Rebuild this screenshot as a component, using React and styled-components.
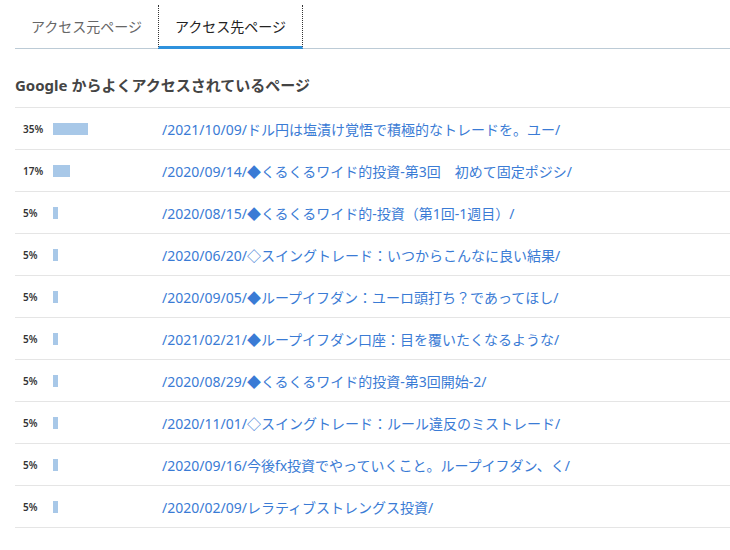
import React from "react";
import styled, { createGlobalStyle } from "styled-components";

const rows = [
  { pct: 35, path: "/2021/10/09/ドル円は塩漬け覚悟で積極的なトレードを。ユー/" },
  { pct: 17, path: "/2020/09/14/◆くるくるワイド的投資-第3回　初めて固定ポジシ/" },
  { pct: 5, path: "/2020/08/15/◆くるくるワイド的-投資（第1回-1週目）/" },
  { pct: 5, path: "/2020/06/20/◇スイングトレード：いつからこんなに良い結果/" },
  { pct: 5, path: "/2020/09/05/◆ループイフダン：ユーロ頭打ち？であってほし/" },
  { pct: 5, path: "/2021/02/21/◆ループイフダン口座：目を覆いたくなるような/" },
  { pct: 5, path: "/2020/08/29/◆くるくるワイド的投資-第3回開始-2/" },
  { pct: 5, path: "/2020/11/01/◇スイングトレード：ルール違反のミストレード/" },
  { pct: 5, path: "/2020/09/16/今後fx投資でやっていくこと。ループイフダン、く/" },
  { pct: 5, path: "/2020/02/09/レラティブストレングス投資/" },
];

export default function App() {
  return (
    <>
      <GlobalStyle />
      <Page>
        <Tabs>
          <Tab>アクセス元ページ</Tab>
          <Tab $active>アクセス先ページ</Tab>
        </Tabs>
        <Heading>Google からよくアクセスされているページ</Heading>
        <Table>
          {rows.map((r, i) => (
            <Row key={i}>
              <PctCell>
                <Pct>{r.pct}%</Pct>
                <Bar style={{ width: r.pct }} />
              </PctCell>
              <Link href="#">{r.path}</Link>
            </Row>
          ))}
        </Table>
      </Page>
    </>
  );
}

const GlobalStyle = createGlobalStyle`
  body {
    margin: 0;
    background: #fff;
    font-family: "Noto Sans", "Noto Sans CJK JP", sans-serif;
  }
`;
const Page = styled.div`
  padding: 5px 0 0 15px;
`;
const Tabs = styled.div`
  display: flex;
  height: 43px;
  border-bottom: 1px solid #bccbd6;
`;
const Tab = styled.div`
  display: flex;
  align-items: center;
  justify-content: center;
  box-sizing: border-box;
  height: 44px;
  margin-bottom: -1px;
  padding: 0 ${p => (p.$active ? "16px" : "15px")};
  font-size: 14px;
  color: ${p => (p.$active ? "#222" : "#666")};
  border-left: 1px dotted ${p => (p.$active ? "#333" : "transparent")};
  border-right: 1px dotted ${p => (p.$active ? "#333" : "transparent")};
  border-bottom: 3px solid ${p => (p.$active ? "#2e92dd" : "transparent")};
`;
const Heading = styled.h2`
  margin: 0;
  padding: 26px 0 0;
  height: 32px;
  font-size: 15px;
  font-weight: bold;
  color: #444;
  line-height: 20px;
`;
const Table = styled.div`
  border-top: 1px solid #e5e5e5;
`;
const Row = styled.div`
  display: grid;
  grid-template-columns: 147px 1fr;
  align-items: center;
  height: 41px;
  border-bottom: 1px solid #e5e5e5;
`;
const PctCell = styled.div`
  display: flex;
  align-items: center;
  padding-left: 8px;
`;
const Pct = styled.span`
  width: 30px;
  font-size: 10px;
  font-weight: 600;
  color: #333;
`;
const Bar = styled.span`
  display: block;
  height: 12px;
  background: #a8c8e8;
`;
const Link = styled.a`
  font-size: 14px;
  color: #3a7bd5;
  text-decoration: none;
  white-space: nowrap;
`;
